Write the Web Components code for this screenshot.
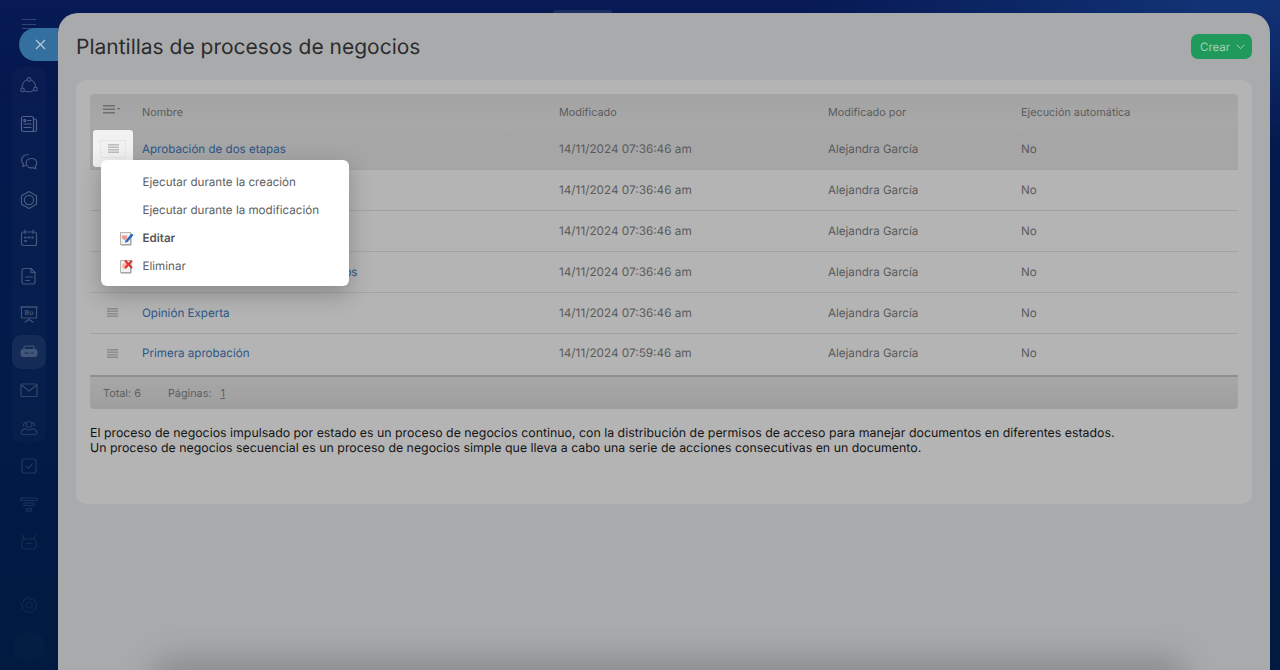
<!DOCTYPE html>
<html lang="es">
<head>
<meta charset="utf-8">
<title>Plantillas de procesos de negocios</title>
<style>
  html, body { margin: 0; height: 100%; background: #031a45; }
  body { font-family: Inter, "Liberation Sans", sans-serif; overflow: hidden; text-rendering: geometricPrecision; }
</style>
</head>
<body>
<app-shell>
  <side-bar slot="side">
    <side-icon name="flow" level="0.24"></side-icon>
    <side-icon name="feed" level="0.3"></side-icon>
    <side-icon name="chat" level="0.27"></side-icon>
    <side-icon name="hex" level="0.27"></side-icon>
    <side-icon name="calendar" level="0.25"></side-icon>
    <side-icon name="doc" level="0.24"></side-icon>
    <side-icon name="board" level="0.23"></side-icon>
    <side-icon name="crm" level="0.2" active></side-icon>
    <side-icon name="mail" level="0.18"></side-icon>
    <side-icon name="people" level="0.12"></side-icon>
    <side-icon name="check" level="0.12" slot="after"></side-icon>
    <side-icon name="funnel" level="0.1" slot="after"></side-icon>
    <side-icon name="robot" level="0.08" slot="after"></side-icon>
    <side-icon name="gear" level="0.05" slot="bottom"></side-icon>
  </side-bar>

  <page-panel slot="main" heading="Plantillas de procesos de negocios">
    <crear-button slot="action">Crear</crear-button>
    <tpl-table>
      <tpl-row slot="row" name="Aprobación de dos etapas" date="14/11/2024 07:36:46 am" selected></tpl-row>
      <tpl-row slot="row" date="14/11/2024 07:36:46 am"></tpl-row>
      <tpl-row slot="row" date="14/11/2024 07:36:46 am"></tpl-row>
      <!-- name is hidden by the menu apart from its last letters -->
      <tpl-row slot="row" name="Aprobación de un documento en pasos" date="14/11/2024 07:36:46 am"></tpl-row>
      <tpl-row slot="row" name="Opinión Experta" date="14/11/2024 07:36:46 am"></tpl-row>
      <tpl-row slot="row" name="Primera aprobación" date="14/11/2024 07:59:46 am" last></tpl-row>
      <pop-menu slot="overlay">
        <menu-item>Ejecutar durante la creación</menu-item>
        <menu-item>Ejecutar durante la modificación</menu-item>
        <menu-item icon="edit" strong>Editar</menu-item>
        <menu-item icon="delete">Eliminar</menu-item>
      </pop-menu>
    </tpl-table>
    <p>El proceso de negocios impulsado por estado es un proceso de negocios continuo, con la distribución de permisos de acceso para manejar documentos en diferentes estados.<br>Un proceso de negocios secuencial es un proceso de negocios simple que lleva a cabo una serie de acciones consecutivas en un documento.</p>
  </page-panel>
</app-shell>

<script>
const ICONS = {
  flow: '<circle cx="10" cy="3.5" r="1.8"/><circle cx="3.5" cy="14" r="1.8"/><circle cx="16.5" cy="13" r="1.8"/><path d="M8.2 3.8C5.2 4.8 3 7.6 3 12.2M11.9 4c2.6 1 4.5 3.4 4.8 7.2M5.3 14.8c2.8 1.5 6.4 1.4 9.6-.5"/>',
  feed: '<rect x="2.5" y="2.5" width="12" height="15" rx="2"/><path d="M14.5 5H16a1.500 1.500 0 0 1 1.500 1.500V16a1.500 1.500 0 0 1-1.500 1.500h-3M8.500 6.500H12M5 10h7M5 13.500h7"/><rect x="5" y="5.500" width="1.500" height="2"/>',
  chat: '<path d="M9 2.500c-3.600 0-6.500 2.500-6.500 5.600 0 1.500.7 2.900 1.800 3.900l-.5 2.500 2.600-1"/><path d="M12.500 6.500c3 0 5.300 2 5.300 4.600 0 1.300-.6 2.500-1.500 3.300l.4 2.400-2.600-1.100c-.5.1-1 .2-1.600.2-3 0-5.300-2.100-5.300-4.800s2.300-4.600 5.300-4.600z"/>',
  hex: '<path d="M10 1.500l7.500 4.300v8.400L10 18.500l-7.500-4.300V5.800z"/><circle cx="10" cy="10" r="4.600"/>',
  calendar: '<rect x="2.5" y="4" width="15" height="13.5" rx="2"/><path d="M6 2v3.500M14 2v3.500"/><path d="M6 9.500h1M9.500 9.500h1M13 9.500h1M6 13h1" stroke-width="1.8"/>',
  doc: '<path d="M5 2.500h7l4 4V16a2 2 0 0 1-2 2H5a2 2 0 0 1-2-2V4.500a2 2 0 0 1 2-2z"/><path d="M12 2.500v4h4M6.500 11h7M6.500 14.500h4"/>',
  board: '<rect x="2.5" y="3" width="15" height="11" rx=".5"/><path d="M10 14v1.500M6 18l4-2.500 4 2.500M1.500 3h17"/><text x="10" y="11" font-size="7" font-weight="600" fill="#fff" stroke="none" text-anchor="middle" font-family="Inter">Bo</text>',
  crm: '<path d="M5 7V5.500A1.500 1.500 0 0 1 6.500 4h7A1.500 1.500 0 0 1 15 5.500V7"/><rect x="1.500" y="7" width="17" height="8" rx="3" fill="#fff" stroke="none"/><path d="M6 11h3.500M12.500 11H14" stroke="#1f3862"/>',
  mail: '<rect x="2" y="4" width="16" height="12.500" rx="1"/><path d="M2.500 5l7.500 6 7.500-6"/>',
  people: '<circle cx="10" cy="6.500" r="3"/><path d="M4.500 16.500c-1.800 0-2.800-1-2.400-2.300.6-1.800 2.500-3 4.400-3.500 1 .8 2.200 1.200 3.500 1.200s2.500-.4 3.500-1.200c1.900.5 3.800 1.700 4.400 3.500.4 1.300-.6 2.300-2.400 2.300z"/><path d="M6.800 4.700A2.400 2.400 0 0 0 4.500 8M13.200 4.700A2.400 2.400 0 0 1 15.500 8"/>',
  check: '<rect x="3" y="3" width="14" height="14" rx="2"/><path d="M7 10.200l2.200 2.200L13.300 8"/>',
  funnel: '<path d="M2 4h16v2.500H2zM5 9h10v2.500H5zM7.500 14.500h5V17h-5z"/>',
  robot: '<rect x="2.5" y="7" width="15" height="10" rx="4"/><path d="M5 7L3.500 3M15 7l1.500-4M7 11.500h6"/>',
  gear: '<circle cx="10" cy="10" r="3"/><path d="M10 2l2 2.300 3-.3.6 3L18 8.800 16.500 11l.7 3-2.900.9L13 17.500l-3-1-3 1-1.300-2.600-2.900-.9.7-3L2 8.800 4.400 7l.6-3 3 .3z"/>'
};

class AppShell extends HTMLElement {
  constructor() {
    super();
    this.attachShadow({ mode: 'open' });
    this.shadowRoot.innerHTML = `
      <style>
        :host {
          display: grid;
          grid-template-columns: 58px 1fr 10px;
          height: 670px;
          position: relative;
          overflow: hidden;
          background:
            radial-gradient(420px 150px at 1230px 0, #123477 0, rgba(18,52,119,0) 100%),
            linear-gradient(180deg, #071a55 0, #04184e 90px, #021b4b 300px, #001a40 670px);
        }
        .close {
          position: absolute;
          left: 19px;
          top: 28px;
          width: 39px;
          height: 33px;
          padding-left: 3px;
          box-sizing: border-box;
          border-radius: 17px 0 0 17px;
          background: #33709f;
          display: flex;
          align-items: center;
          justify-content: center;
        }
        .tab {
          position: absolute;
          left: 553px;
          top: 10px;
          width: 59px;
          height: 3px;
          border-radius: 5px 5px 0 0;
          background: #1d2f60;
        }
      </style>
      <slot name="side"></slot>
      <slot name="main"></slot>
      <div class="tab"></div>
      <div class="close">
        <svg width="11" height="11" viewBox="0 0 11 11" fill="none" stroke="#b9c9d8" stroke-width="1.2"><path d="M1 1l9 9M10 1l-9 9"/></svg>
      </div>`;
  }
}

class SideBar extends HTMLElement {
  constructor() {
    super();
    this.attachShadow({ mode: 'open' });
    this.shadowRoot.innerHTML = `
      <style>
        :host {
          display: flex;
          flex-direction: column;
          align-items: center;
          padding-top: 19px;
          height: 670px;
          box-sizing: border-box;
        }
        .burger {
          width: 14px;
          height: 10px;
          margin-bottom: 38px;
          border-top: 1px solid #33446f;
          border-bottom: 1px solid #33446f;
          box-sizing: border-box;
          display: flex;
          align-items: center;
        }
        .burger i { display: block; width: 100%; height: 1px; background: #33446f; }
        .group {
          width: 34px;
          height: 376px;
          margin-bottom: 4px;
          border-radius: 10px;
          background: rgba(255,255,255,.02);
        }
        .bottom { margin-top: 25px; }
        .square {
          margin-top: 9px;
          width: 30px;
          height: 26px;
          border-radius: 8px;
          background: rgba(255,255,255,.015);
        }
      </style>
      <div class="burger"><i></i></div>
      <div class="group"><slot></slot></div>
      <slot name="after"></slot>
      <div class="bottom"><slot name="bottom"></slot></div>
      <div class="square"></div>`;
  }
}

class SideIcon extends HTMLElement {
  connectedCallback() {
    if (this.shadowRoot) return;
    this.attachShadow({ mode: 'open' });
    const name = this.getAttribute('name');
    const level = this.getAttribute('level') || '0.3';
    this.shadowRoot.innerHTML = `
      <style>
        :host {
          display: flex;
          align-items: center;
          justify-content: center;
          width: 34px;
          height: 38px;
          box-sizing: border-box;
        }
        :host([active]) {
          height: 34px;
          margin: 2px 0;
          border-radius: 10px;
          background: rgba(255,255,255,.06);
        }
        svg { opacity: ${level}; }
      </style>
      <svg width="20" height="20" viewBox="0 0 20 20" fill="none" stroke="#fff" stroke-width="1.2" stroke-linecap="round" stroke-linejoin="round">${ICONS[name]}</svg>`;
  }
}

class PagePanel extends HTMLElement {
  connectedCallback() {
    if (this.shadowRoot) return;
    this.attachShadow({ mode: 'open' });
    this.shadowRoot.innerHTML = `
      <style>
        :host {
          display: block;
          margin-top: 13px;
          height: 657px;
          position: relative;
          border-radius: 20px 20px 0 0;
          background: #a9aaac;
          padding: 0 18px;
          box-sizing: border-box;
          overflow: hidden;
        }
        header {
          height: 67px;
          display: flex;
          align-items: center;
          justify-content: space-between;
        }
        h1 {
          margin: 1px 0 0;
          font-size: 21px;
          font-weight: 400;
          color: #2b2c2e;
        }
        .card {
          height: 424px;
          box-sizing: border-box;
          border-radius: 10px;
          background: #b4b4b4;
          padding: 14px;
        }
        ::slotted(p) {
          margin: 15.5px 0 0;
          font-size: 12.35px;
          line-height: 15px;
          color: #141414;
        }
        .glow {
          position: absolute;
          left: 100px;
          right: 90px;
          bottom: -40px;
          height: 40px;
          border-radius: 20px;
          box-shadow: 0 -6px 26px 10px rgba(70,70,70,.25);
        }
      </style>
      <header><h1>${this.getAttribute('heading')}</h1><slot name="action"></slot></header>
      <div class="card"><slot></slot></div>
      <div class="glow"></div>`;
  }
}

class CrearButton extends HTMLElement {
  constructor() {
    super();
    this.attachShadow({ mode: 'open' });
    this.shadowRoot.innerHTML = `
      <style>
        :host {
          display: inline-flex;
          align-items: center;
          gap: 6px;
          height: 25px;
          width: 61px;
          box-sizing: border-box;
          padding-left: 9px;
          border-radius: 7px;
          background: #1f9a5b;
          color: #a7d2ba;
          font-size: 11.5px;
        }
      </style>
      <slot></slot>
      <svg width="9" height="6" viewBox="0 0 9 6" fill="none" stroke="#a7d2ba" stroke-width="1"><path d="M.7 .8l3.8 3.8L8.3 .8"/></svg>`;
  }
}

class TplTable extends HTMLElement {
  constructor() {
    super();
    this.attachShadow({ mode: 'open' });
    this.shadowRoot.innerHTML = `
      <style>
        :host {
          display: block;
          position: relative;
          font-size: 10.85px;
          color: #5c5c5c;
        }
        .head {
          display: grid;
          grid-template-columns: 52px 417px 269px 193px 1fr;
          align-items: center;
          height: 35px;
          padding-top: 1px;
          box-sizing: border-box;
          border-radius: 4px 4px 0 0;
          background: linear-gradient(180deg, #a3a3a3, #a9a9a9);
        }
        .menu-mark { display: flex; padding: 0 0 5px 13px; }
        .foot {
          display: flex;
          align-items: center;
          height: 34px;
          box-sizing: border-box;
          padding-left: 13px;
          border-top: 2px solid #8f8f8f;
          border-radius: 0 0 4px 4px;
          background: linear-gradient(180deg, #a7a7a7, #9f9f9f);
          color: #5f5f5f;
        }
        .foot b { font-weight: 400; margin-left: 27px; }
        .foot u { margin-left: 9px; }
      </style>
      <div class="head">
        <div class="menu-mark">
          <svg width="18" height="9" viewBox="0 0 18 9" fill="#6f6f6f"><path d="M0 0h12v1.500H0zM0 3.500h12V5H0zM0 7h12v1.500H0zM14 3h3.500l-1.750 2z"/></svg>
        </div>
        <div>Nombre</div><div>Modificado</div><div>Modificado por</div><div>Ejecución automática</div>
      </div>
      <slot name="row"></slot>
      <div class="foot">Total: 6<b>Páginas:</b><u>1</u></div>
      <slot name="overlay"></slot>`;
  }
}

class TplRow extends HTMLElement {
  connectedCallback() {
    if (this.shadowRoot) return;
    this.attachShadow({ mode: 'open' });
    const selected = this.hasAttribute('selected');
    this.shadowRoot.innerHTML = `
      <style>
        :host {
          display: grid;
          grid-template-columns: 52px 417px 269px 193px 1fr;
          align-items: center;
          height: 41px;
          padding-bottom: 1px;
          box-sizing: border-box;
          border-bottom: 1px solid #a2a2a2;
          font-size: 11.6px;
          color: #5a5a5a;
          position: relative;
        }
        :host([selected]) { background: #a6a6a6; }
        :host([last]) { border-bottom: 0; padding-bottom: 3px; }
        .grip { display: flex; justify-content: center; width: 44px; }
        .date { font-size: 11.75px; }
        .trigger {
          position: absolute;
          left: 3px;
          top: 1px;
          width: 40px;
          height: 37px;
          box-sizing: border-box;
          border-radius: 3px;
          background: #f1f1f1;
          display: flex;
          align-items: center;
          justify-content: center;
        }
        .trigger span {
          display: flex;
          align-items: center;
          justify-content: center;
          width: 26px;
          height: 18px;
          border: 1px solid #e6e6e6;
          box-sizing: border-box;
        }
        a { color: #2d5688; white-space: nowrap; }
      </style>
      ${selected
        ? `<div class="trigger"><span>${this.grip('#bcbcbc')}</span></div><div></div>`
        : `<div class="grip">${this.grip('#8c8c8c')}</div>`}
      <div><a>${this.getAttribute('name') || ''}</a></div>
      <div class="date">${this.getAttribute('date')}</div>
      <div>Alejandra García</div>
      <div>No</div>`;
  }

  grip(color) {
    return `<svg width="11" height="9" viewBox="0 0 11 9" fill="${color}"><path d="M0 0h11v1.500H0zM0 2.500h11V4H0zM0 5h11v1.500H0zM0 7.500h11V9H0z"/></svg>`;
  }
}

class PopMenu extends HTMLElement {
  constructor() {
    super();
    this.attachShadow({ mode: 'open' });
    this.shadowRoot.innerHTML = `
      <style>
        :host {
          position: absolute;
          left: 11px;
          top: 66px;
          width: 248px;
          height: 126px;
          box-sizing: border-box;
          padding: 8px 0;
          border-radius: 6px;
          background: #fff;
          box-shadow: 0 8px 22px rgba(40,40,40,.3);
        }
      </style>
      <slot></slot>`;
  }
}

class MenuItem extends HTMLElement {
  connectedCallback() {
    if (this.shadowRoot) return;
    this.attachShadow({ mode: 'open' });
    const icon = this.getAttribute('icon');
    const mark = icon === 'edit'
      ? '<path d="M3.500 5.500h6l-1 3.500-2 1-2-1z" fill="#ee9a90"/><path d="M7.500 10.500l6-7 2 1.500-6 7-2.500.8z" fill="#2468c0"/>'
      : icon === 'delete'
        ? '<circle cx="7" cy="8" r="3" fill="#f6b9b2"/><path d="M7 2.500l7 7.500M14 2.500l-7 7.500" stroke="#e0322b" stroke-width="2"/>'
        : '';
    this.shadowRoot.innerHTML = `
      <style>
        :host {
          display: flex;
          align-items: center;
          height: 28px;
          padding-left: 17px;
          gap: 8.5px;
          font-size: 11.6px;
          color: #5e5e5e;
        }
        :host([strong]) { font-weight: 600; color: #555; }
        .ico { width: 16px; height: 16px; flex: none; }
      </style>
      <svg class="ico" viewBox="0 0 16 16" fill="none">
        ${icon ? '<rect x="2.500" y="2.500" width="10" height="12" fill="#f2f2f2" stroke="#b5b5b5"/><path d="M3 15h10V4" stroke="#9a9a9a"/>' : ''}
        ${mark}
      </svg>
      <slot></slot>`;
  }
}

customElements.define('app-shell', AppShell);
customElements.define('side-bar', SideBar);
customElements.define('side-icon', SideIcon);
customElements.define('page-panel', PagePanel);
customElements.define('crear-button', CrearButton);
customElements.define('tpl-table', TplTable);
customElements.define('tpl-row', TplRow);
customElements.define('pop-menu', PopMenu);
customElements.define('menu-item', MenuItem);
</script>
</body>
</html>
